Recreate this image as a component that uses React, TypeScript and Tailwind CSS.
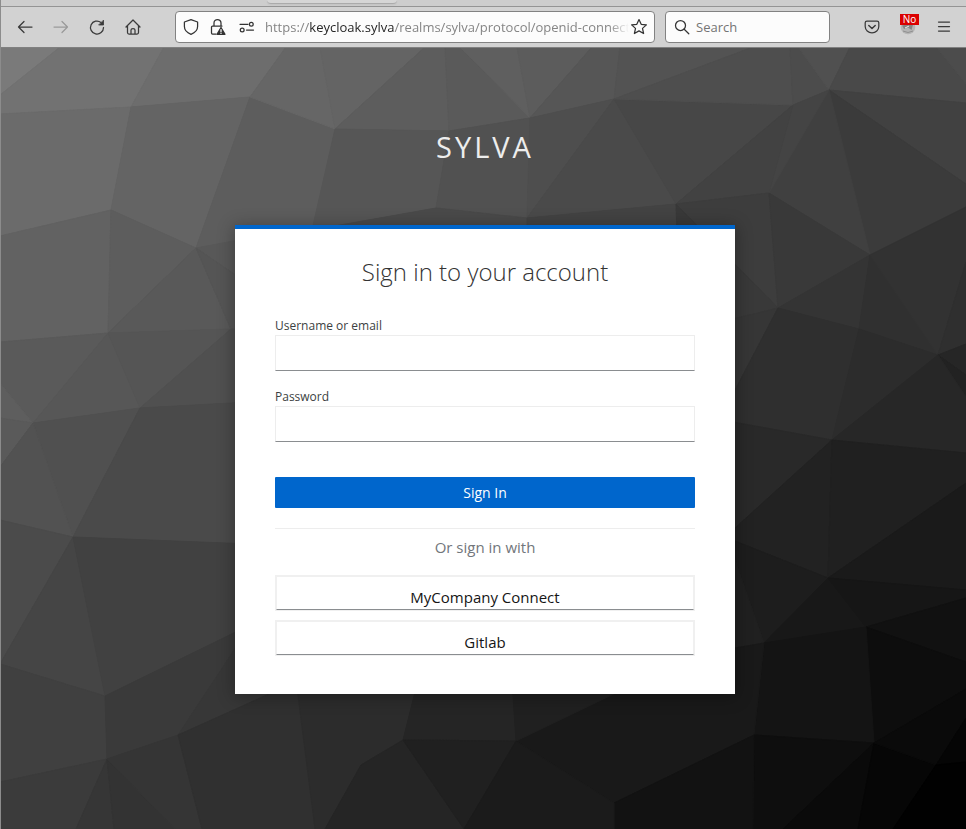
import type { ReactNode } from "react";

type Facet = [points: string, fill: string];

const facets: Facet[] = [
  ["0,47 60,47 0,95", "#7a7a7a"],
  ["60,47 164,47 131,107 0,114 0,95", "#727272"],
  ["164,47 286,47 250,97 131,107", "#6d6d6d"],
  ["0,114 131,107 111,210 0,236", "#6b6b6b"],
  ["131,107 250,97 196,248 111,210", "#646464"],
  ["250,97 335,129 314,225 310,260 196,248", "#5d5d5d"],
  ["286,47 320,47 335,129 250,97", "#666666"],
  ["320,47 425,47 335,129", "#646464"],
  ["425,47 445,47 449,131 335,129", "#5d5d5d"],
  ["445,47 460,47 530,118 449,131", "#5a5a5a"],
  ["460,47 517,47 530,118", "#5f5f5f"],
  ["517,47 592,47 530,118", "#5c5c5c"],
  ["592,47 620,47 614,99 530,118", "#565656"],
  ["620,47 753,47 614,99", "#535353"],
  ["335,129 449,131 436,208 312,230", "#565656"],
  ["449,131 530,118 527,218 436,208", "#515151"],
  ["530,118 614,99 527,218", "#4e4e4e"],
  ["614,99 676,204 527,218", "#4a4a4a"],
  ["436,208 527,218 527,260 312,260 312,230", "#4a4a4a"],
  ["527,218 676,204 680,260 527,260", "#434343"],
  ["614,99 793,105 676,204", "#474747"],
  ["753,47 790,47 793,105 614,99", "#4e4e4e"],
  ["790,47 798,47 829,90 793,105", "#4c4c4c"],
  ["798,47 850,47 829,90", "#505050"],
  ["850,47 936,47 966,84 966,103 829,90", "#494949"],
  ["936,47 966,47 966,84", "#4c4c4c"],
  ["829,90 966,103 966,184", "#414141"],
  ["829,90 966,184 966,207 870,255", "#3b3b3b"],
  ["829,90 870,255 769,193", "#404040"],
  ["793,105 829,90 769,193", "#444444"],
  ["793,105 769,193 676,204", "#424242"],
  ["676,204 769,193 778,308", "#3d3d3d"],
  ["676,204 778,308 680,332", "#393939"],
  ["769,193 870,255 778,308", "#393939"],
  ["870,255 859,329 778,308", "#343434"],
  ["870,255 938,355 859,329", "#303030"],
  ["870,255 966,207 966,262 938,355", "#323232"],
  ["966,262 966,344 938,355", "#2f2f2f"],
  ["680,332 778,308 735,390 700,400", "#363636"],
  ["778,308 859,329 832,440 700,416 735,390", "#2f2f2f"],
  ["859,329 938,355 832,440", "#2c2c2c"],
  ["938,355 966,344 966,375", "#262626"],
  ["938,355 966,375 966,397", "#222222"],
  ["938,355 966,397 966,453 832,440", "#272727"],
  ["832,440 700,416 700,557 735,528", "#292929"],
  ["832,440 735,528 735,541 828,578", "#222222"],
  ["832,440 966,453 966,483 828,578", "#202020"],
  ["828,578 966,483 966,590", "#1a1a1a"],
  ["735,541 828,578 764,643 735,560", "#1d1d1d"],
  ["735,560 764,643 735,648", "#202020"],
  ["828,578 866,627 764,643", "#181818"],
  ["828,578 966,590 966,598 866,627", "#161616"],
  ["866,627 966,598 966,662", "#111111"],
  ["866,627 966,662 966,689 874,743", "#0d0d0d"],
  ["764,643 866,627 874,743 754,735", "#141414"],
  ["764,643 754,735 614,803 516,741 622,660 735,648", "#191919"],
  ["754,735 874,743 783,829 753,829", "#0e0e0e"],
  ["754,735 753,829 614,829 614,803", "#121212"],
  ["874,743 858,829 783,829", "#0a0a0a"],
  ["874,743 936,765 893,829 858,829", "#060606"],
  ["874,743 966,689 966,718 936,765", "#0a0a0a"],
  ["966,718 966,762 936,765", "#050505"],
  ["936,765 966,762 966,829 893,829", "#010101"],
  ["0,236 111,210 108,333 0,342", "#626262"],
  ["111,210 196,248 108,333", "#5d5d5d"],
  ["196,248 231,329 108,333", "#595959"],
  ["196,248 250,238 250,285", "#585858"],
  ["196,248 250,285 250,329 231,329", "#555555"],
  ["0,342 108,333 33,423 0,383", "#5a5a5a"],
  ["0,383 33,423 0,418", "#5e5e5e"],
  ["0,418 33,423 0,467", "#5a5a5a"],
  ["108,333 140,408 33,423", "#575757"],
  ["108,333 231,329 140,408", "#555555"],
  ["231,329 250,329 250,402 140,408", "#505050"],
  ["33,423 140,408 73,537", "#505050"],
  ["0,467 33,423 73,537 0,520", "#525252"],
  ["140,408 250,402 250,544 73,537", "#4a4a4a"],
  ["0,520 73,537 0,664", "#4b4b4b"],
  ["73,537 105,696 0,664", "#454545"],
  ["73,537 250,544 250,625 105,696", "#414141"],
  ["0,664 105,696 107,759 0,782", "#404040"],
  ["105,696 250,625 250,626 178,735 107,759", "#3a3a3a"],
  ["178,735 250,626 300,682", "#373737"],
  ["0,782 107,759 76,829 0,829", "#3b3b3b"],
  ["107,759 114,829 76,829", "#363636"],
  ["107,759 175,829 114,829", "#333333"],
  ["107,759 178,735 202,829 175,829", "#353535"],
  ["178,735 300,680 315,829 202,829", "#303030"],
  ["296,680 418,680 403,740 361,765 325,829 315,829", "#2c2c2c"],
  ["403,740 464,829 325,829 361,765", "#252525"],
  ["418,680 512,680 516,741 403,740", "#252525"],
  ["512,680 622,660 622,690 516,741", "#202020"],
  ["403,740 516,741 464,829", "#202020"],
  ["516,741 614,803 614,829 464,829", "#1b1b1b"],
];

function Backdrop() {
  return (
    <svg
      aria-hidden="true"
      className="absolute inset-0 -z-10 h-full w-full"
      viewBox="1 48 965 781"
      preserveAspectRatio="xMidYMin slice"
    >
      <rect x="0" y="47" width="966" height="782" fill="#303030" />
      {facets.map(([points, fill]) => (
        <polygon key={points} points={points} fill={fill} stroke={fill} strokeWidth="1" strokeLinejoin="round" />
      ))}
    </svg>
  );
}

function Icon({ children, className = "" }: { children: ReactNode; className?: string }) {
  return (
    <svg
      aria-hidden="true"
      viewBox="0 0 16 16"
      className={`size-4 shrink-0 overflow-visible ${className}`}
      fill="none"
      stroke="currentColor"
      strokeWidth="1.25"
      strokeLinecap="round"
      strokeLinejoin="round"
    >
      {children}
    </svg>
  );
}

function ToolButton({ label, children, disabled }: { label: string; children: ReactNode; disabled?: boolean }) {
  return (
    <button
      type="button"
      aria-label={label}
      disabled={disabled}
      className="flex h-8 w-9 items-center justify-center text-[#3a3a3a] disabled:text-[#9a9a9a]"
    >
      {children}
    </button>
  );
}

function BrowserBar() {
  return (
    <header className="text-[13px] leading-5">
      <div className="flex h-[7px] border-b border-[#949494] bg-[#cdcdcd]">
        <div className="ml-[266px] h-1 w-[130px] rounded-b-sm border-b border-[#ababab] bg-[#d6d6d6] shadow-xs" />
      </div>
      <div className="flex h-[41px] items-center border-b border-[#808080] bg-[#d2d2d2] pr-1 pl-[6px]">
        <ToolButton label="Back">
          <Icon><path d="M15 8H1.500M7 2.500 1.500 8 7 13.500" /></Icon>
        </ToolButton>
        <ToolButton label="Forward" disabled>
          <Icon><path d="M1 8h13.500M9 2.500 14.500 8 9 13.500" /></Icon>
        </ToolButton>
        <ToolButton label="Reload">
          <Icon>
            <path d="M14.500 8.500A6.500 6.500 0 1 1 12 3.400" />
            <path d="M14.500 1.500v4.500H10z" fill="currentColor" strokeWidth="0.8" />
          </Icon>
        </ToolButton>
        <ToolButton label="Home">
          <Icon>
            <path d="M1 8 8 1l7 7M2.500 6.800V13.500q0 1.500 1.500 1.500h8q1.500 0 1.500-1.500V6.800M6 15v-4q0-1.500 2-1.500t2 1.500v4" />
          </Icon>
        </ToolButton>

        <div className="ml-6 flex h-8 min-w-0 flex-1 items-center rounded-[4px] border border-[#828282] bg-[#fcfcfc] px-[7px] text-[#333]">
          <Icon><path d="M8 .7 14.600 3v4.500c0 3.500-2.800 6.300-6.600 7.800C4.200 13.800 1.400 11 1.400 7.500V3z" /></Icon>
          <Icon className="ml-[11px]">
            <path d="M4 7V4a3.500 3.500 0 0 1 7 0v3M6 15H2.500q-1 0-1-1V8q0-1 1-1h9.500" />
            <path d="M11 8.500 15 15.300H7z" fill="currentColor" />
            <path d="M11 10.500v2.300M11 14.300v.1" stroke="#fff" />
          </Icon>
          <Icon className="ml-[13px]">
            <path d="M1 5.300h8M7.500 11H14.500" />
            <circle cx="12.300" cy="5.300" r="1.900" />
            <circle cx="3.200" cy="11" r="1.900" />
          </Icon>
          <div
            role="textbox"
            aria-label="Address"
            contentEditable
            suppressContentEditableWarning
            className="ml-[10px] min-w-0 flex-1 overflow-hidden whitespace-nowrap text-[#858585] outline-none [mask-image:linear-gradient(to_left,transparent,black_20px)]"
          >
            https://<span className="text-[#262626]">keycloak.sylva</span>/realms/sylva/protocol/openid-connect/
          </div>
          <button type="button" aria-label="Bookmark this page" className="ml-[2px]">
            <Icon><path d="m8 .6 2.200 4.700 5.200.6-3.900 3.500 1.100 5.100L8 11.900l-4.600 2.600 1.100-5.100L.6 5.900l5.200-.6z" /></Icon>
          </button>
        </div>

        <div className="ml-[10px] flex h-8 w-[165px] items-center rounded-[4px] border border-[#828282] bg-[#fcfcfc] px-2 text-[#333]">
          <Icon className="mr-[6px]">
            <circle cx="6.500" cy="6.500" r="5" />
            <path d="m10.200 10.200 4.600 4.600" />
          </Icon>
          <input
            type="search"
            aria-label="Search"
            placeholder="Search"
            className="w-full min-w-0 bg-transparent outline-none placeholder:text-[#747474]"
          />
        </div>

        <div className="ml-6 flex">
          <ToolButton label="Save to Pocket">
            <Icon>
              <path d="M3 2h10q1.800 0 1.800 1.800V7.500a6.800 6.300 0 0 1-13.600 0V3.800Q1.200 2 3 2z" />
              <path d="M4.800 6.500 8 9.500l3.200-3" strokeWidth="1.500" />
            </Icon>
          </ToolButton>
          <ToolButton label="Extension">
            <span className="relative flex">
              <svg aria-hidden="true" viewBox="0 0 16 16" className="size-4">
                <circle cx="8" cy="8" r="7.300" fill="#b5b5b5" />
                <path d="M2 6.500 13.500 4 11.500 11 8 8.500 4 10z" fill="#858585" />
                <path d="M3 12q5 3 10 0" stroke="#909090" fill="none" />
                <path d="m5 9 4-2" stroke="#eee" />
              </svg>
              <span className="absolute -top-[5px] left-0 h-[11px] w-[19px] bg-[#da0000] text-center text-[10px] leading-[11px] text-white">
                No
              </span>
            </span>
          </ToolButton>
          <ToolButton label="Menu">
            <Icon><path d="M2.500 3h11M2.500 7.500h11M2.500 12h11" /></Icon>
          </ToolButton>
        </div>
      </div>
    </header>
  );
}

function Field({ id, label, type }: { id: string; label: string; type: string }) {
  return (
    <div>
      <label htmlFor={id} className="block text-[12px] leading-[18px] text-[#3c3f42]">
        {label}
      </label>
      <input
        id={id}
        name={id}
        type={type}
        className="block h-9 w-full border border-[#ededed] border-b-[#8a8d90] bg-white px-2 text-base text-[#151515] outline-none"
      />
    </div>
  );
}

function ProviderLink({ children }: { children: ReactNode }) {
  return (
    <a href="#" className="block border border-[#f0f0f0]">
      <span className="block h-[34px] border border-[#f0f0f0] border-b-[#8a8d90] pt-2 text-center text-[15px] leading-6 text-[#151515]">
        {children}
      </span>
    </a>
  );
}

export default function App() {
  return (
    <div className="flex min-h-screen flex-col border-l border-[#8c8c8c] font-['Open_Sans',sans-serif]">
      <BrowserBar />
      <main className="relative isolate flex flex-1 flex-col items-center overflow-hidden pr-4 pb-8 pl-[19px]">
        <Backdrop />
        <h1 className="mt-[79px] text-[29px] leading-10 tracking-[3px] text-[#ededed]">SYLVA</h1>
        <section className="mt-[58px] w-full max-w-[500px] border-t-4 border-[#0066cc] bg-white px-10 pt-[25px] pb-[38px] shadow-[0_2px_16px_1px_rgba(0,0,0,0.3)]">
          <h2 className="text-center text-[24px] leading-9 font-light text-[#333]">Sign in to your account</h2>
          <form className="mt-[27px]" onSubmit={(event) => event.preventDefault()}>
            <div className="flex flex-col gap-[17px]">
              <Field id="username" label="Username or email" type="text" />
              <Field id="password" label="Password" type="password" />
            </div>
            <button
              type="submit"
              className="mt-[35px] block h-[31px] w-full rounded-[1px] bg-[#0066cc] text-[14px] leading-5 text-white"
            >
              Sign In
            </button>
          </form>
          <div className="mt-5 border-t border-[#ededed] pt-[6px]">
            <h3 className="text-center text-[15px] leading-6 text-[#72767b]">Or sign in with</h3>
            <nav aria-label="Identity providers" className="mt-4 flex flex-col gap-[9px]">
              <ProviderLink>MyCompany Connect</ProviderLink>
              <ProviderLink>Gitlab</ProviderLink>
            </nav>
          </div>
        </section>
      </main>
    </div>
  );
}
